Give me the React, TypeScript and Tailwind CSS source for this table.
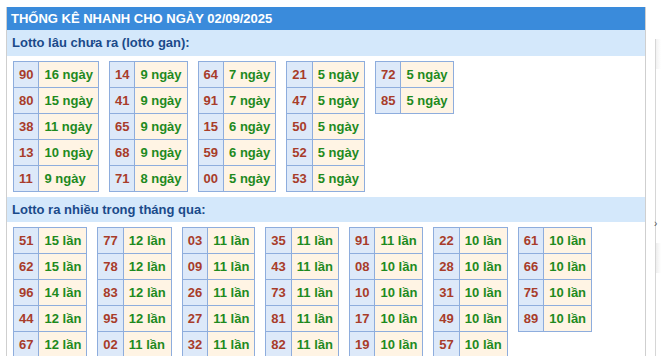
import React from "react";

type Item = [string, number];

const ganCols: Item[][] = [
  [["90", 16], ["80", 15], ["38", 11], ["13", 10], ["11", 9]],
  [["14", 9], ["41", 9], ["65", 9], ["68", 9], ["71", 8]],
  [["64", 7], ["91", 7], ["15", 6], ["59", 6], ["00", 5]],
  [["21", 5], ["47", 5], ["50", 5], ["52", 5], ["53", 5]],
  [["72", 5], ["85", 5]],
];

const hotCols: Item[][] = [
  [["51", 15], ["62", 15], ["96", 14], ["44", 12], ["67", 12]],
  [["77", 12], ["78", 12], ["83", 12], ["95", 12], ["02", 11]],
  [["03", 11], ["09", 11], ["26", 11], ["27", 11], ["32", 11]],
  [["35", 11], ["43", 11], ["73", 11], ["81", 11], ["82", 11]],
  [["91", 11], ["08", 10], ["10", 10], ["17", 10], ["19", 10]],
  [["22", 10], ["28", 10], ["31", 10], ["49", 10], ["57", 10]],
  [["61", 10], ["66", 10], ["75", 10], ["89", 10]],
];

function StatTable({ rows, unit }: { rows: Item[]; unit: string }) {
  return (
    <table className="border-collapse self-start">
      <tbody>
        {rows.map(([num, count]) => (
          <tr key={num}>
            <td className="h-[26px] border border-[#8eaddd] bg-[#dde9f9] px-[5px] py-0 text-[#a83c2a]">
              {num}
            </td>
            <td className="h-[26px] border border-[#8eaddd] bg-[#fff4e4] px-[5px] py-0 whitespace-nowrap text-[#1e8a1e]">
              {count} {unit}
            </td>
          </tr>
        ))}
      </tbody>
    </table>
  );
}

export default function App() {
  return (
    <div className="h-[356px] overflow-hidden bg-white font-['Liberation_Sans',Arial,sans-serif] text-[13px] font-bold">
      <div className="flex pt-[7px] pl-[6px]">
        <div className="h-[400px] w-[640px] border-x border-[#cfcfcf]">
          {/* Header */}
          <div className="flex h-[23px] items-center bg-[#3a8bdb] pl-[4px] text-white">
            THỐNG KÊ NHANH CHO NGÀY 02/09/2025
          </div>

          {/* Lotto gan */}
          <div className="flex h-[26px] items-center bg-[#d4e8fb] pl-[5px] text-[#1a4a8a]">
            Lotto lâu chưa ra (lotto gan):
          </div>
          <div className="flex gap-[10px] py-[5px] pl-[6px]">
            {ganCols.map((col, i) => (
              <StatTable key={i} rows={col} unit="ngày" />
            ))}
          </div>

          {/* Lotto ra nhiều */}
          <div className="flex h-[25px] items-center bg-[#d4e8fb] pl-[5px] text-[#1a4a8a]">
            Lotto ra nhiều trong tháng qua:
          </div>
          <div className="flex gap-[10px] py-[5px] pl-[6px]">
            {hotCols.map((col, i) => (
              <StatTable key={i} rows={col} unit="lần" />
            ))}
          </div>
        </div>

        {/* edge of the next panel */}
        <div className="ml-[9px] mt-[32px] flex-1 border-l border-[#d6d6d6]">
          <div className="h-[30px] bg-gradient-to-r from-[#f2f2f2] to-white" />
          <div className="mt-[150px] -ml-[2px] text-[10px] font-normal leading-none text-[#555]">
            ›
          </div>
          <div className="mt-[14px] h-[30px] bg-gradient-to-r from-[#eeeeee] to-white" />
        </div>
      </div>
    </div>
  );
}
